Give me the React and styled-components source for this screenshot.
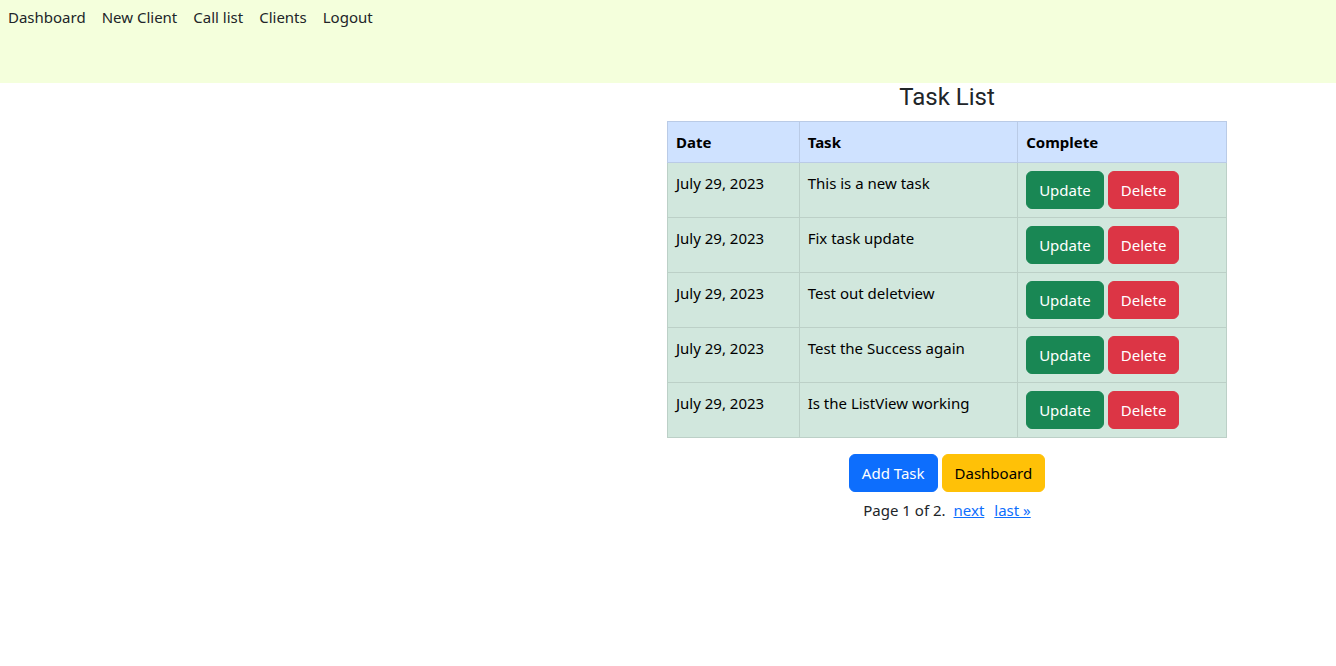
import React from "react";
import styled, { createGlobalStyle } from "styled-components";

const Global = createGlobalStyle`
  html, body { margin: 0; padding: 0; background: #fff; }
  body {
    font-family: "Noto Sans", "Open Sans", sans-serif;
    font-size: 16px;
    line-height: 24px;
    color: #212529;
  }
  * { box-sizing: border-box; }
`;

const NavBar = styled.nav`
  height: 83px;
  background: #f4ffdc;
  display: flex;
  align-items: flex-start;
  gap: 16px;
  padding: 5px 8px;
`;

const NavLink = styled.a`
  color: #212529;
  text-decoration: none;
  font-size: 15px;
  line-height: 24px;
`;

const Main = styled.main`
  display: flex;
  justify-content: flex-end;
  padding-right: 109px;
`;

const Column = styled.section`
  width: 560px;
  display: flex;
  flex-direction: column;
  align-items: center;
`;

const Title = styled.h1`
  margin: 0 0 9px;
  font-family: Roboto, "Noto Sans", sans-serif;
  font-weight: 400;
  font-size: 24px;
  line-height: 29px;
`;

const Table = styled.table`
  width: 560px;
  border-collapse: collapse;
  font-size: 15px;
`;

const Th = styled.th`
  background: #cfe2ff;
  border: 1px solid #bacbe6;
  text-align: left;
  font-weight: 700;
  padding: 8px;
  height: 40px;
  width: ${(p) => p.$w}px;
  color: #000;
`;

const Td = styled.td`
  background: #d1e7dd;
  border: 1px solid #bcd0c7;
  padding: 8px;
  height: 55px;
  vertical-align: top;
  color: #000;
`;

const Actions = styled.div`
  display: flex;
  gap: 4px;
`;

const Button = styled.button`
  font-family: inherit;
  font-size: 15px;
  line-height: 24px;
  height: 38px;
  padding: 6px 12px;
  border: 1px solid ${(p) => p.$bg};
  border-radius: 6px;
  background: ${(p) => p.$bg};
  color: ${(p) => p.$fg || "#fff"};
  cursor: pointer;
`;

const ButtonRow = styled.div`
  margin-top: 16px;
  display: flex;
  gap: 4px;
`;

const Pager = styled.div`
  margin-top: 6px;
  font-size: 15px;
  display: flex;
  gap: 8px;
`;

const PageLink = styled.a`
  color: #0d6efd;
  text-decoration: underline;
  margin-left: ${(p) => p.$ml || 0}px;
`;

const tasks = [
  "This is a new task",
  "Fix task update",
  "Test out deletview",
  "Test the Success again",
  "Is the ListView working",
];

export default function App() {
  return (
    <>
      <Global />
      <NavBar>
        <NavLink href="#">Dashboard</NavLink>
        <NavLink href="#">New Client</NavLink>
        <NavLink href="#">Call list</NavLink>
        <NavLink href="#">Clients</NavLink>
        <NavLink href="#">Logout</NavLink>
      </NavBar>
      <Main>
        <Column>
          <Title>Task List</Title>
          <Table>
            <thead>
              <tr>
                <Th $w={132}>Date</Th>
                <Th $w={219}>Task</Th>
                <Th $w={209}>Complete</Th>
              </tr>
            </thead>
            <tbody>
              {tasks.map((t) => (
                <tr key={t}>
                  <Td>July 29, 2023</Td>
                  <Td>{t}</Td>
                  <Td>
                    <Actions>
                      <Button $bg="#198754">Update</Button>
                      <Button $bg="#dc3545">Delete</Button>
                    </Actions>
                  </Td>
                </tr>
              ))}
            </tbody>
          </Table>
          <ButtonRow>
            <Button $bg="#0d6efd">Add Task</Button>
            <Button $bg="#ffc107" $fg="#000">Dashboard</Button>
          </ButtonRow>
          <Pager>
            <span>Page 1 of 2.</span>
            <PageLink href="#">next</PageLink>
            <PageLink href="#" $ml={2}>last »</PageLink>
          </Pager>
        </Column>
      </Main>
    </>
  );
}
